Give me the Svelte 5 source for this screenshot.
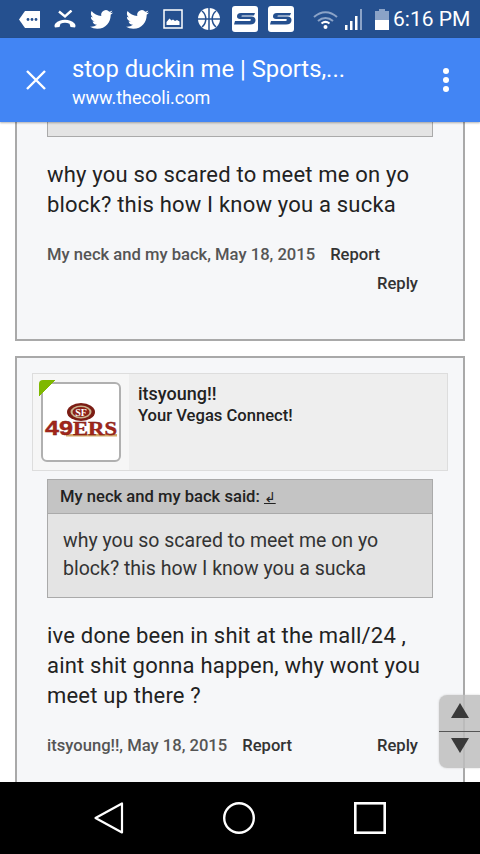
<script>
	const twitter = 'M23.95 4.57a10 10 0 01-2.82.77 4.96 4.96 0 002.16-2.72c-.95.56-2 .96-3.13 1.18a4.92 4.92 0 00-8.38 4.48C7.69 8.1 4.07 6.13 1.64 3.16a4.82 4.82 0 00-.67 2.48c0 1.71.87 3.21 2.19 4.1a4.9 4.9 0 01-2.23-.62v.06a4.92 4.92 0 003.95 4.83 5 5 0 01-2.21.08 4.94 4.94 0 004.6 3.42 9.87 9.87 0 01-6.1 2.1c-.39 0-.78-.02-1.17-.06a14 14 0 007.56 2.21c9.05 0 14-7.5 14-13.99 0-.21 0-.42-.02-.63A9.94 9.94 0 0024 4.59z';
</script>

<div class="screen">
	<header class="status">
		<svg class="i-tag" viewBox="0 0 21 17"><path d="M6 0h15v17H6L0 8.500z" fill="#fff" /><circle cx="9" cy="8.500" r="1.400" fill="#25508f" /><circle cx="13" cy="8.500" r="1.400" fill="#25508f" /><circle cx="17" cy="8.500" r="1.400" fill="#25508f" /></svg>
		<svg class="i-missed" viewBox="0 0 22 18"><path d="M1 17.500c-.8-1-.6-2.800.4-3.900C4 11 7 9.800 11 9.800s7 1.200 9.600 3.800c1 1.100 1.200 2.900.4 3.900l-4.500-.5-1-3.200c-1.500-.7-3-1-4.500-1s-3 .3-4.500 1l-1 3.200z" fill="#fff" /><path d="M5 1.500l6 5 6.500-6" fill="none" stroke="#fff" stroke-width="2.400" /></svg>
		<svg class="i-bird" viewBox="0 0 24 24"><path d={twitter} fill="#fff" /></svg>
		<svg class="i-bird second" viewBox="0 0 24 24"><path d={twitter} fill="#fff" /></svg>
		<svg class="i-pic" viewBox="0 0 20 20"><rect x="1" y="1" width="18" height="18" fill="none" stroke="#fff" stroke-width="1.500" /><path d="M3.500 16v-3l3-3.500 2 2 1.500-1 2 1.500 2-1 2.500 1.500V16z" fill="#fff" /></svg>
		<svg class="i-ball" viewBox="0 0 22 22"><circle cx="11" cy="11" r="11" fill="#fff" /><path d="M11 0v22M0 11h22M4 3c3 2.500 3.800 5 3.800 8s-.8 5.500-3.800 8M18 3c-3 2.500-3.800 5-3.800 8s.8 5.500 3.800 8" fill="none" stroke="#25508f" stroke-width="1.500" /></svg>
		<svg class="i-s" viewBox="0 0 26 26"><rect width="26" height="26" rx="3" fill="#fff" /><path d="M23 7H9c-3 0-4 1.500-4 3.500 0 1.500 1 2.500 3 2.500h10c1.200 0 1.200 2-.5 2H3l-1 3.500h16c3.500 0 5.500-1.500 5.500-4.500 0-2-1.500-3.500-4-3.500H10c-1 0-1-1 .5-1H22z" fill="#25508f" /></svg>
		<svg class="i-s last" viewBox="0 0 26 26"><rect width="26" height="26" rx="3" fill="#fff" /><path d="M23 7H9c-3 0-4 1.500-4 3.500 0 1.500 1 2.500 3 2.500h10c1.200 0 1.200 2-.5 2H3l-1 3.500h16c3.500 0 5.500-1.500 5.500-4.500 0-2-1.500-3.500-4-3.500H10c-1 0-1-1 .5-1H22z" fill="#25508f" /></svg>
		<svg class="i-wifi" viewBox="0 0 25 19"><path d="M1 7c7-6.500 16-6.500 23 0M5 11c4.500-4 10.500-4 15 0" fill="none" stroke="#8ba3c7" stroke-width="2" /><path d="M8.500 13.500c2.500-2 5.500-2 8 0" fill="none" stroke="#fff" stroke-width="2" /><circle cx="12.500" cy="17" r="2" fill="#fff" /></svg>
		<svg class="i-signal" viewBox="0 0 18 21"><path d="M0 16h2.500v5H0zM5 12h2.500v9H5zM10 7h2.500v14H10z" fill="#fff" /><path d="M15 0h2v21h-2z" fill="#8ba3c7" /></svg>
		<svg class="i-batt" viewBox="0 0 14 21"><path d="M4 0h6v2h4v19H0V2h4z" fill="#8ba3c7" /><path d="M0 11h14v10H0z" fill="#fff" /></svg>
		<span class="time">6:16 PM</span>
	</header>

	<div class="toolbar">
		<svg class="close" viewBox="0 0 22 22"><path d="M2 2l18 18M20 2L2 20" stroke="#fff" stroke-width="2.400" fill="none" /></svg>
		<div class="page-info">
			<div class="page-title">stop duckin me | Sports,...</div>
			<div class="page-url">www.thecoli.com</div>
		</div>
		<div class="more"><i></i><i></i><i></i></div>
	</div>

	<main class="content">
		<section class="card first">
			<div class="quote-stub"></div>
			<p class="post-text">why you so scared to meet me on yo block? this how I know you a sucka</p>
			<div class="meta">
				<span class="byline">My neck and my back, May 18, 2015</span>
				<span class="link report">Report</span>
			</div>
			<div class="reply-row"><span class="link">Reply</span></div>
		</section>

		<section class="card">
			<div class="user-head">
				<div class="avatar-col">
					<div class="avatar">
						<svg viewBox="0 0 76 76" width="76" height="76">
							<ellipse cx="38" cy="28" rx="14" ry="9" fill="#7b1d14" />
							<ellipse cx="38" cy="28" rx="10.500" ry="6.500" fill="#c9b48e" />
							<ellipse cx="38" cy="28" rx="8.500" ry="5" fill="#8c2217" />
							<text x="38" y="31.500" class="sf">SF</text>
							<rect x="23" y="50" width="51" height="2.500" fill="#d3a868" />
							<text x="2" y="51" class="niners" textLength="72" lengthAdjust="spacingAndGlyphs">49<tspan class="ers">ERS</tspan></text>
						</svg>
					</div>
					<span class="corner"></span>
				</div>
				<div class="user-info">
					<div class="user-name">itsyoung!!</div>
					<div class="user-title">Your Vegas Connect!</div>
				</div>
			</div>
			<div class="quote">
				<div class="quote-head">My neck and my back said: <span class="quote-arrow">↲</span></div>
				<div class="quote-body">why you so scared to meet me on yo block? this how I know you a sucka</div>
			</div>
			<p class="post-text second">ive done been in shit at the mall/24 , aint shit gonna happen, why wont you meet up there ?</p>
			<div class="meta spread">
				<span class="byline">itsyoung!!, May 18, 2015</span>
				<span class="link report">Report</span>
				<span class="link push">Reply</span>
			</div>
		</section>

		<div class="scroller">
			<span class="up"></span>
			<span class="divider"></span>
			<span class="down"></span>
		</div>
	</main>

	<nav class="navbar">
		<svg width="30" height="32" viewBox="0 0 30 32"><path d="M1.500 16L28 1.500v29z" fill="none" stroke="#fff" stroke-width="2.200" stroke-linejoin="round" /></svg>
		<svg width="32" height="32" viewBox="0 0 32 32"><circle cx="16" cy="16" r="14.800" fill="none" stroke="#fff" stroke-width="2.400" /></svg>
		<svg width="32" height="32" viewBox="0 0 32 32"><rect x="1.300" y="1.300" width="29.400" height="29.400" fill="none" stroke="#fff" stroke-width="2.600" /></svg>
	</nav>
</div>

<style>
	:global(body) {
		margin: 0;
		background: #fff;
	}

	.screen {
		width: 480px;
		height: 854px;
		display: flex;
		flex-direction: column;
		overflow: hidden;
		font-family: Roboto, sans-serif;
	}

	.status {
		height: 38px;
		flex: none;
		display: flex;
		align-items: center;
		padding-left: 19px;
		background: #25508f;
		color: #fff;
	}

	.status svg {
		flex: none;
		display: block;
	}

	.i-tag { width: 21px; height: 17px; margin: 1px 14px 0 0; }
	.i-missed { width: 22px; height: 18px; margin: 0 14px 0 0; }
	.i-bird { width: 23px; height: 23px; margin: 0 13px 0 0; }
	.i-bird.second { margin-right: 14px; }
	.i-pic { width: 20px; height: 20px; margin: 0 15px 0 0; }
	.i-ball { width: 22px; height: 22px; margin: 0 12px 0 0; }
	.i-s { width: 26px; height: 26px; margin: 0 10px 0 0; }
	.i-s.last { margin-right: 19px; }
	.i-wifi { width: 25px; height: 19px; margin: 0 7px 0 0; }
	.i-signal { width: 18px; height: 21px; margin: 0 12px 0 0; }
	.i-batt { width: 14px; height: 21px; margin: 0 4px 0 0; }

	.time {
		font-size: 21px;
		line-height: 40px;
		white-space: nowrap;
	}

	.toolbar {
		height: 84px;
		flex: none;
		display: flex;
		align-items: center;
		background: #4285f4;
		color: #fff;
		box-shadow: 0 1px 2px rgba(0, 0, 0, 0.3);
		position: relative;
		z-index: 2;
	}

	.close {
		width: 22px;
		height: 22px;
		margin: 0 25px;
		flex: none;
	}

	.page-info {
		flex: 1;
		margin-top: 3px;
	}

	.page-title {
		font-size: 23.800px;
		line-height: 30px;
	}

	.page-url {
		font-size: 18px;
		line-height: 24px;
		margin-top: 2px;
	}

	.more {
		display: grid;
		gap: 3px;
		margin-right: 31px;
	}

	.more i {
		width: 6px;
		height: 6px;
		border-radius: 50%;
		background: #fff;
	}

	.content {
		flex: 1;
		min-height: 0;
		overflow: hidden;
		position: relative;
		background: #fff;
		display: flex;
		flex-direction: column;
		gap: 15px;
		padding: 0 15px;
	}

	.card {
		flex: none;
		border: 2px solid #a9a9a9;
		background: #f6f7f9;
		padding: 15px 15px 40px;
		color: #222;
	}

	.card.first {
		border-top: 0;
		padding: 0 30px 0;
		height: 219px;
		box-sizing: border-box;
	}

	.quote-stub {
		height: 14px;
		border: 1px solid #aaa;
		border-top: 0;
		background: #e4e4e4;
	}

	.post-text {
		margin: 23px 0 0;
		font-size: 22px;
		letter-spacing: 0.2px;
		line-height: 30px;
		color: #222;
	}

	.post-text.second {
		margin: 23px 15px 0;
	}

	.meta {
		display: flex;
		font-size: 16.600px;
		line-height: 20px;
		font-weight: 500;
		margin-top: 25px;
	}

	.meta.spread {
		margin: 25px 15px 0;
		padding-right: 15px;
	}

	.byline {
		color: #555;
	}

	.link {
		color: #333;
	}

	.report {
		margin-left: 15px;
	}

	.push {
		margin-left: auto;
	}

	.reply-row {
		display: flex;
		justify-content: flex-end;
		padding-right: 15px;
		margin-top: 9px;
		font-size: 16.600px;
		line-height: 20px;
		font-weight: 500;
	}

	.user-head {
		display: flex;
		height: 98px;
		box-sizing: border-box;
		border: 1px solid #ddd;
		background: #eee;
	}

	.avatar-col {
		width: 96px;
		flex: none;
		background: #f6f6f6;
		position: relative;
		padding: 8px;
		box-sizing: border-box;
	}

	.avatar {
		width: 80px;
		height: 80px;
		box-sizing: border-box;
		border: 2px solid #b0b0b0;
		border-radius: 6px;
		background: #fff;
		overflow: hidden;
	}

	.avatar svg {
		display: block;
	}

	.sf {
		font-family: "Liberation Serif", serif;
		font-size: 10px;
		font-weight: 700;
		fill: #fff;
		text-anchor: middle;
	}

	.niners {
		font-family: "Liberation Sans", sans-serif;
		font-size: 20px;
		font-weight: 700;
		fill: #a3261b;
		stroke: #7b1d14;
		stroke-width: 0.400px;
	}

	.ers {
		font-family: "Liberation Serif", serif;
		font-size: 18px;
	}

	.corner {
		position: absolute;
		left: 6px;
		top: 6px;
		width: 17px;
		height: 17px;
		border-top-left-radius: 4px;
		background: linear-gradient(135deg, #7fb800 50%, transparent 50%);
	}

	.user-info {
		padding: 9px 9px;
		font-size: 16.600px;
		line-height: 22px;
		font-weight: 500;
		color: #222;
	}

	.user-name {
		font-size: 18px;
	}

	.quote {
		margin: 8px 15px 0;
		border: 1px solid #aaa;
	}

	.quote-head {
		height: 33px;
		line-height: 33px;
		background: #c4c4c4;
		padding-left: 12px;
		font-size: 16.600px;
		font-weight: 500;
		color: #222;
		border-bottom: 1px solid #aaa;
	}

	.quote-arrow {
		text-decoration: underline;
		font-size: 14px;
		font-family: "DejaVu Sans", sans-serif;
	}

	.quote-body {
		background: #e4e4e4;
		padding: 13px 15px;
		height: 57px;
		font-size: 19.500px;
		line-height: 28px;
		color: #333;
	}

	.scroller {
		position: absolute;
		top: 573px;
		right: 0;
		width: 41px;
		height: 73px;
		border-radius: 8px 0 0 8px;
		background: rgba(190, 190, 190, 0.85);
		box-shadow: 0 0 2px rgba(190, 190, 190, 0.8);
	}

	.divider {
		position: absolute;
		left: 0;
		right: 0;
		top: 36px;
		height: 1px;
		background: #555;
	}

	.up,
	.down {
		position: absolute;
		left: 12px;
		width: 0;
		height: 0;
		border-left: 9px solid transparent;
		border-right: 9px solid transparent;
	}

	.up {
		top: 8px;
		border-bottom: 15px solid #3a3a3a;
	}

	.down {
		top: 43px;
		border-top: 15px solid #3a3a3a;
	}

	.navbar {
		height: 72px;
		flex: none;
		background: #000;
		display: flex;
		align-items: center;
		padding-left: 94px;
		gap: 99px;
		position: relative;
		z-index: 2;
	}
</style>
